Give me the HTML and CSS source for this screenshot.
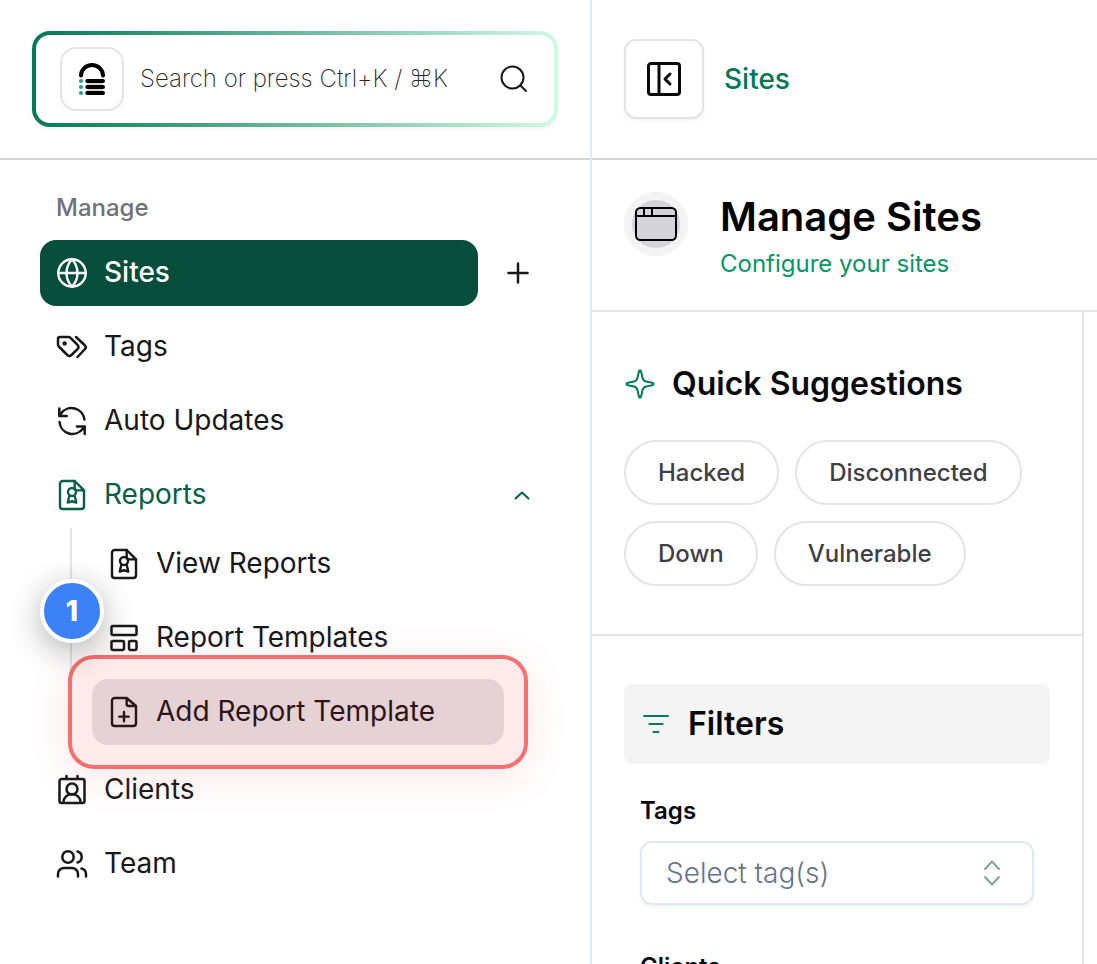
FILE: index.html
```html
<!DOCTYPE html>
<html lang="en">
<head>
<meta charset="utf-8">
<meta name="viewport" content="width=device-width, initial-scale=1">
<title>Manage Sites</title>
<link rel="stylesheet" href="styles.css">
</head>
<body>
<svg class="sprite" aria-hidden="true">
  <symbol id="report" viewBox="0 0 24 24">
    <path d="M14 1.500H5a2 2 0 0 0-2 2v17a2 2 0 0 0 2 2h14a2 2 0 0 0 2-2v-12z"/>
    <path d="M14 1.500v5a2 2 0 0 0 2 2h5"/>
    <circle cx="12" cy="9.700" r="3"/>
    <path d="M10 12.500l-1.200 5.200 3.200-1 3.200 1-1.200-5.200"/>
  </symbol>
</svg>
<div class="app">
  <aside class="sidebar">
    <div class="sidebar-header">
      <div class="search">
        <span class="logo">
          <svg viewBox="0 0 28 34" width="28" height="34" aria-hidden="true">
            <path d="M9 22h16M9 28h16" stroke="#d4d4d4" stroke-width="2"/>
            <path d="M3 13.500A11 10.500 0 0 1 25 13.500M9.300 19H25M9.300 25H25M9.300 31H25" stroke="#000" stroke-width="4" stroke-linecap="round"/>
            <g fill="#2a9d8f"><circle cx="3" cy="19" r="2.100"/><circle cx="3" cy="25" r="2.100"/><circle cx="3" cy="31" r="2.100"/></g>
          </svg>
        </span>
        <input class="search-input" type="text" aria-label="Search" placeholder="Search or press Ctrl+K / ⌘K">
        <button class="search-button" type="button" aria-label="Search">
          <svg class="icon thin" viewBox="0 0 32 32"><circle cx="14.500" cy="14.500" r="11"/><path d="M22.500 22.500l5.500 5.500"/></svg>
        </button>
      </div>
    </div>
    <nav class="nav" aria-label="Manage">
      <h2 class="nav-label">Manage</h2>
      <ul class="menu">
        <li class="menu-split">
          <a class="item item-active" href="#sites" aria-current="page">
            <svg class="icon" viewBox="0 0 24 24"><circle cx="12" cy="12" r="10.300"/><path d="M1.700 12h20.600M12 1.700c-5.500 6-5.500 14.600 0 20.600M12 1.700c5.500 6 5.500 14.600 0 20.600"/></svg>
            <span class="item-text">Sites</span>
          </a>
          <button class="add" type="button" aria-label="Add site">
            <svg class="icon" viewBox="0 0 32 32"><path class="bold" d="M16 6.500v19M6.500 16h19"/></svg>
          </button>
        </li>
        <li><a class="item" href="#tags">
          <svg class="icon" viewBox="0 0 32 32"><path class="bold" d="M2 8a2 2 0 0 1 2-2h8.500a3 3 0 0 1 2 .8l7 7a3 3 0 0 1 0 4.200l-6 6a3 3 0 0 1-4.200 0l-8.500-8.500a3 3 0 0 1-.8-2zM20 6l9 8.500a2.500 2.500 0 0 1 0 3.500l-7.500 8"/><circle class="dot" cx="8.600" cy="12.400" r="2.200"/></svg>
          <span class="item-text">Tags</span>
        </a></li>
        <li><a class="item" href="#updates">
          <svg class="icon" viewBox="0 0 32 32"><path class="bold" d="M28.500 14.500A13 13 0 0 0 5 8.500L3.300 11M3.300 3.500V11h7.500M3.500 17a13 13 0 0 0 23.500 6.500L28.700 21.500M21 21.500h7.700V29"/></svg>
          <span class="item-text">Auto Updates</span>
        </a></li>
        <li>
          <a class="item item-open" href="#reports" aria-expanded="true">
            <svg class="icon" viewBox="0 0 24 24"><use href="#report"/></svg>
            <span class="item-text">Reports</span>
            <svg class="chevron" viewBox="0 0 24 24"><path d="M5.500 15.500l6.500-6 6.500 6"/></svg>
          </a>
          <ul class="submenu">
            <li><a class="item" href="#view">
              <svg class="icon" viewBox="0 0 24 24"><use href="#report"/></svg>
              <span class="item-text">View Reports</span>
            </a></li>
            <li><a class="item" href="#templates">
              <svg class="icon" viewBox="0 0 32 32"><path class="bold" d="M5 4h22a1.500 1.500 0 0 1 1.500 1.500v6A1.500 1.500 0 0 1 27 13H5a1.500 1.500 0 0 1-1.500-1.500v-6A1.500 1.500 0 0 1 5 4zM5 19h9.500a1.500 1.500 0 0 1 1.500 1.500v6a1.500 1.500 0 0 1-1.500 1.500H5a1.500 1.500 0 0 1-1.500-1.500v-6A1.500 1.500 0 0 1 5 19zM22.500 19H27a1.500 1.500 0 0 1 1.500 1.500v6A1.500 1.500 0 0 1 27 28h-4.500a1.500 1.500 0 0 1-1.500-1.500v-6a1.500 1.500 0 0 1 1.500-1.500z"/></svg>
              <span class="item-text">Report Templates</span>
            </a></li>
            <li class="spotlight">
              <a class="item item-hover" href="#add">
                <svg class="icon" viewBox="0 0 24 24"><path d="M14 1.500H5a2 2 0 0 0-2 2v17a2 2 0 0 0 2 2h14a2 2 0 0 0 2-2v-13zM14 1.500v4.500a1.500 1.500 0 0 0 1.500 1.500H21M12 12v7M8.500 15.500h7"/></svg>
                <span class="item-text">Add Report Template</span>
              </a>
              <span class="spotlight-frame"></span>
              <span class="spotlight-step">1</span>
            </li>
          </ul>
        </li>
        <li><a class="item" href="#clients">
          <svg class="icon" viewBox="0 0 32 32"><path class="bold" d="M5.500 5h21a2 2 0 0 1 2 2v20a2 2 0 0 1-2 2h-21a2 2 0 0 1-2-2V7a2 2 0 0 1 2-2zM10.500 2v3M21.500 2v3M7.500 28.500a8.500 8.500 0 0 1 17 0"/><circle class="bold" cx="16" cy="15" r="5.500"/></svg>
          <span class="item-text">Clients</span>
        </a></li>
        <li><a class="item" href="#team">
          <svg class="icon" viewBox="0 0 32 32"><circle class="bold" cx="12" cy="9" r="5.700"/><path class="bold" d="M2 28.500V26a6 6 0 0 1 6-6h8a6 6 0 0 1 6 6v2.500M21.500 3.500a5.700 5.700 0 0 1 0 11M25.500 20.500a6 6 0 0 1 4.500 5.500v2.500"/></svg>
          <span class="item-text">Team</span>
        </a></li>
      </ul>
    </nav>
  </aside>
  <main class="main">
    <header class="topbar">
      <button class="toggle" type="button" aria-label="Collapse sidebar">
        <svg viewBox="0 0 36 36" width="36" height="36" aria-hidden="true"><path d="M5 2.500h26a2.500 2.500 0 0 1 2.500 2.500v26a2.500 2.500 0 0 1-2.500 2.500H5A2.500 2.500 0 0 1 2.500 31V5A2.500 2.500 0 0 1 5 2.500zM13 2.500v31M24 13l-5 5 5 5"/></svg>
      </button>
      <a class="crumb" href="#sites">Sites</a>
    </header>
    <section class="page-head">
      <span class="page-icon">
        <svg viewBox="0 0 44 36" width="44" height="36" aria-hidden="true"><rect x="2" y="2" width="40" height="32" rx="4.500"/><path d="M2 10h40M10 2v8M18 2v8"/></svg>
      </span>
      <div>
        <h1 class="page-title">Manage Sites</h1>
        <p class="page-sub">Configure your sites</p>
      </div>
    </section>
    <div class="content">
      <div class="panel">
        <section class="suggestions">
          <h2 class="heading">
            <svg class="icon thin" viewBox="0 0 32 32"><path d="M16 2.200c.6 0 .9.600 1.100 1.500l1.400 6c.5 2.200 1.300 3.300 3.600 3.800l6 1.200c1 .2 1.500.6 1.500 1.300s-.5 1.100-1.500 1.300l-6 1.200c-2.300.5-3.100 1.600-3.600 3.800l-1.400 6c-.2.900-.5 1.500-1.100 1.500s-.9-.6-1.100-1.500l-1.400-6c-.5-2.200-1.300-3.300-3.600-3.800l-6-1.200c-1-.2-1.500-.6-1.500-1.300s.5-1.100 1.500-1.300l6-1.200c2.300-.5 3.100-1.600 3.600-3.800l1.400-6c.2-.9.500-1.500 1.100-1.500z"/></svg>
            Quick Suggestions
          </h2>
          <div class="pills">
            <button class="pill" type="button">Hacked</button>
            <button class="pill" type="button">Disconnected</button>
            <button class="pill" type="button">Down</button>
            <button class="pill" type="button">Vulnerable</button>
          </div>
        </section>
        <section class="filters">
          <h2 class="heading filters-head">
            <svg class="icon thin" viewBox="0 0 32 32"><path d="M4 8h24M9.500 16h13M13.500 24h5"/></svg>
            Filters
          </h2>
          <div class="field">
            <label class="field-label" for="tags">Tags</label>
            <div class="select-wrap">
              <select class="select" id="tags"><option>Select tag(s)</option></select>
              <svg class="select-icon" viewBox="0 0 32 32"><path d="M9 12l7-7.500 7 7.500M9 20l7 7.500 7-7.500"/></svg>
            </div>
          </div>
          <div class="field">
            <label class="field-label" for="clients">Clients</label>
            <div class="select-wrap">
              <select class="select" id="clients"><option>Select client(s)</option></select>
              <svg class="select-icon" viewBox="0 0 32 32"><path d="M9 12l7-7.500 7 7.500M9 20l7 7.500 7-7.500"/></svg>
            </div>
          </div>
        </section>
      </div>
    </div>
  </main>
</div>
</body>
</html>
```
FILE: styles.css
```css
* { box-sizing: border-box; }

body {
  margin: 0;
  background: #fff;
  color: #18181b;
  font-family: Inter, "Liberation Sans", sans-serif;
  font-size: 28px;
  line-height: 40px;
}

h1, h2, p, ul { margin: 0; padding: 0; }
ul { list-style: none; }
a { color: inherit; text-decoration: none; }
button, input, select { font: inherit; color: inherit; margin: 0; }
button { padding: 0; border: 0; background: none; cursor: pointer; }
svg { display: block; flex: none; fill: none; }
.sprite { position: absolute; width: 0; height: 0; }

.app { display: flex; height: 100vh; overflow: hidden; }

/* Sidebar */
.sidebar { flex: none; width: 592px; border-right: 2px solid #e2e8f0; }
.sidebar-header {
  display: flex;
  align-items: center;
  height: 160px;
  padding: 0 32px;
  border-bottom: 2px solid #d4d4d8;
}
.search {
  display: flex;
  flex: 1;
  align-items: center;
  gap: 16px;
  min-width: 0;
  height: 96px;
  padding: 0 24px;
  border: 4px solid transparent;
  border-radius: 18px;
  background: linear-gradient(#fff, #fff) padding-box, linear-gradient(to right, #047857, #d1fae5) border-box;
  box-shadow: 0 2px 4px rgba(0, 0, 0, .05);
}
.logo {
  display: flex;
  flex: none;
  align-items: center;
  justify-content: center;
  width: 64px;
  height: 64px;
  border: 2px solid #e4e4e7;
  border-radius: 16px;
}
.search-input {
  flex: 1;
  min-width: 0;
  padding: 0;
  border: 0;
  outline: 0;
  background: none;
  font-size: 24px;
  font-weight: 200;
}
.search-input::placeholder { color: #27272a; opacity: 1; }

.icon { width: 32px; height: 32px; stroke: currentColor; stroke-width: 1.8; stroke-linecap: round; stroke-linejoin: round; }
.icon.thin { stroke-width: 2; }
.bold { stroke-width: 2.5; }
.dot { fill: currentColor; stroke: none; }

.nav { padding: 16px 40px; }
.nav-label { padding: 16px; color: #71717a; font-size: 24px; font-weight: 500; line-height: 32px; }
.menu { display: flex; flex-direction: column; gap: 8px; }
.menu-split { display: flex; gap: 8px; }
.item { display: flex; flex: 1; align-items: center; gap: 16px; padding: 12px 16px; border-radius: 16px; }
.item-text { flex: 1; padding-bottom: 2px; }
.item-active { background: #064e3b; color: #fff; font-weight: 500; }
.item-open { color: #065f46; }
.item-hover { background: #e4e4e7; }
.add { display: flex; align-items: center; justify-content: center; width: 64px; }
.chevron { width: 24px; height: 24px; stroke: currentColor; stroke-width: 2; stroke-linecap: round; stroke-linejoin: round; }

.submenu {
  display: flex;
  flex-direction: column;
  gap: 8px;
  margin: 0 46px 0 30px;
  padding: 3px 0 4px 20px;
  border-left: 2px solid #e4e4e7;
}

.spotlight { position: relative; }
.spotlight-frame {
  position: absolute;
  inset: -24px;
  border: 4px solid #f57070;
  border-radius: 26px;
  background: rgba(255, 0, 0, .08);
  box-shadow: 0 8px 40px rgba(239, 68, 68, .14);
  pointer-events: none;
}
.spotlight-step {
  position: absolute;
  top: -100px;
  left: -52px;
  width: 64px;
  height: 64px;
  border: 4px solid #fff;
  border-radius: 50%;
  background: #3b82f6;
  box-shadow: 0 8px 32px rgba(0, 0, 0, .3);
  color: #fff;
  font-weight: 800;
  line-height: 56px;
  text-align: center;
}

/* Main area */
.main { display: flex; flex: 1; flex-direction: column; min-width: 0; }
.topbar {
  display: flex;
  flex: none;
  align-items: center;
  gap: 20px;
  height: 160px;
  padding: 0 32px;
  border-bottom: 2px solid #d4d4d8;
}
.toggle {
  display: flex;
  align-items: center;
  justify-content: center;
  width: 80px;
  height: 80px;
  border: 2px solid #e4e4e7;
  border-radius: 12px;
  box-shadow: 0 2px 4px rgba(0, 0, 0, .05);
}
.toggle svg { stroke: #09090b; stroke-width: 3; stroke-linecap: round; stroke-linejoin: round; }
.crumb { color: #047857; font-weight: 500; }

.page-head { display: flex; flex: none; gap: 32px; padding: 32px 32px 30px; border-bottom: 2px solid #e4e4e7; }
.page-icon {
  display: flex;
  flex: none;
  align-items: center;
  justify-content: center;
  width: 64px;
  height: 64px;
  border: 8px solid #f4f4f5;
  border-radius: 50%;
  background: #d4d4d8;
}
.page-icon svg { stroke: #000; stroke-width: 2; }
.page-title { color: #000; font-size: 40px; font-weight: 600; line-height: 50px; }
.page-sub { margin-top: 6px; color: #059669; font-size: 24px; line-height: 32px; }

.content { display: flex; flex: 1; min-height: 0; }
.panel { width: 492px; overflow: hidden; border-right: 2px solid #e4e4e7; }
.suggestions { padding: 48px 32px; border-bottom: 2px solid #e4e4e7; }
.heading { display: flex; align-items: center; gap: 16px; color: #09090b; font-size: 32px; font-weight: 600; line-height: 48px; }
.heading .icon { color: #047857; }
.pills { display: flex; flex-wrap: wrap; gap: 16px; margin-top: 32px; }
.pill {
  height: 65px;
  padding: 0 32px;
  border: 2px solid #e4e4e7;
  border-radius: 33px;
  color: #3f3f46;
  font-size: 24px;
  font-weight: 500;
}

.filters { padding: 48px 32px; }
.filters-head { padding: 16px; border-radius: 8px; background: #f4f4f5; }
.field { padding: 0 16px; margin-top: 46px; }
.filters-head + .field { margin-top: 31px; }
.field-label { display: block; color: #09090b; font-size: 24px; font-weight: 600; line-height: 32px; }
.select-wrap { position: relative; margin-top: 14px; }
.select {
  display: block;
  width: 100%;
  height: 64px;
  padding: 0 24px;
  appearance: none;
  border: 2px solid #e2e8f0;
  border-radius: 12px;
  background: #fff;
  box-shadow: 0 2px 4px rgba(0, 0, 0, .05);
  color: #64748b;
  font-weight: 300;
}
.select-icon {
  position: absolute;
  top: 16px;
  right: 26px;
  width: 32px;
  height: 32px;
  stroke: #83a598;
  stroke-width: 2;
  stroke-linecap: round;
  stroke-linejoin: round;
  pointer-events: none;
}
```
